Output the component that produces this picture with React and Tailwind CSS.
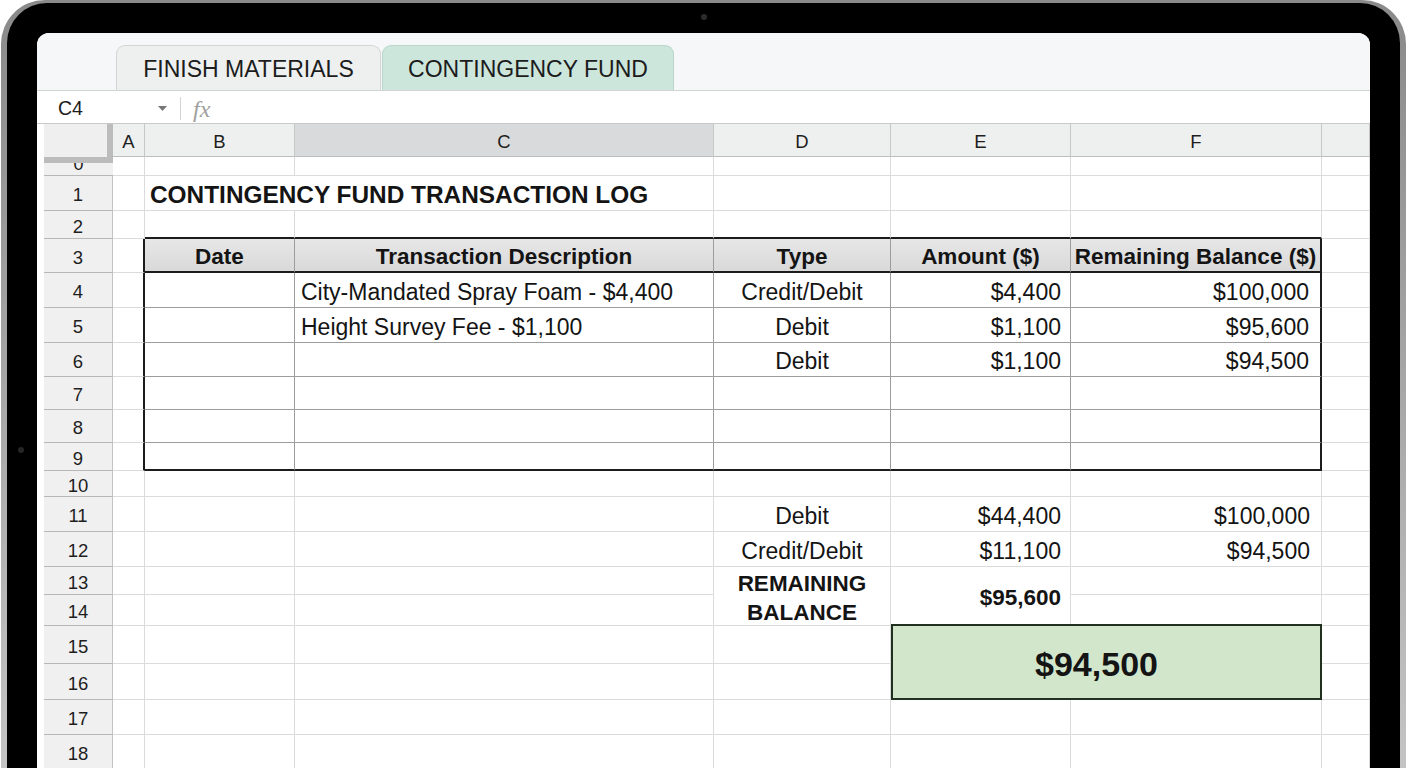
import { Fragment } from "react";

const COLS = ["A", "B", "C", "D", "E", "F", "G"];
const TABLE = ["B", "C", "D", "E", "F"];

// row number + height in px
const ROWS = [
    { n: 0, h: 19 },
    { n: 1, h: 35 },
    { n: 2, h: 28 },
    { n: 3, h: 34 },
    { n: 4, h: 35 },
    { n: 5, h: 35 },
    { n: 6, h: 34 },
    { n: 7, h: 33 },
    { n: 8, h: 33 },
    { n: 9, h: 28 },
    { n: 10, h: 26 },
    { n: 11, h: 35 },
    { n: 12, h: 35 },
    { n: 13, h: 28 },
    { n: 14, h: 31 },
    { n: 15, h: 38 },
    { n: 16, h: 36 },
    { n: 17, h: 35 },
    { n: 18, h: 35 },
];

const CELLS = {
    "1B": { text: "CONTINGENCY FUND TRANSACTION LOG", kind: "title" },
    "3B": { text: "Date", kind: "head" },
    "3C": { text: "Transaction Description", kind: "head" },
    "3D": { text: "Type", kind: "head" },
    "3E": { text: "Amount ($)", kind: "head" },
    "3F": { text: "Remaining Balance ($)", kind: "head" },
    "4C": { text: "City-Mandated Spray Foam - $4,400", kind: "left" },
    "4D": { text: "Credit/Debit", kind: "center" },
    "4E": { text: "$4,400", kind: "amount" },
    "4F": { text: "$100,000", kind: "balance" },
    "5C": { text: "Height Survey Fee - $1,100", kind: "left" },
    "5D": { text: "Debit", kind: "center" },
    "5E": { text: "$1,100", kind: "amount" },
    "5F": { text: "$95,600", kind: "balance" },
    "6D": { text: "Debit", kind: "center" },
    "6E": { text: "$1,100", kind: "amount" },
    "6F": { text: "$94,500", kind: "balance" },
    "11D": { text: "Debit", kind: "center" },
    "11E": { text: "$44,400", kind: "amount" },
    "11F": { text: "$100,000", kind: "balance" },
    "12D": { text: "Credit/Debit", kind: "center" },
    "12E": { text: "$11,100", kind: "amount" },
    "12F": { text: "$94,500", kind: "balance" },
};

const KIND = {
    title: "justify-start pl-[5px] text-[24.4px] font-bold whitespace-nowrap",
    head: "justify-center text-[22.5px] font-bold whitespace-nowrap",
    left: "justify-start pl-[6px] text-[23px] whitespace-nowrap",
    center: "justify-center text-[23px]",
    amount: "justify-end pr-[9px] text-[23px]",
    balance: "justify-end pr-[11px] text-[23px]",
};

const SKIP = ["1C", "14D", "14E", "15F", "16E", "16F"];

const inTable = (r, c) => r >= 3 && r <= 9 && TABLE.includes(c);

function borderRight(r, c) {
    if ((c === "A" || c === "F") && r >= 3 && r <= 9) return "border-r-2 border-r-[#1c1c1c]";
    if (inTable(r, c)) return "border-r border-r-[#9d9d9d]";
    return "border-r border-r-[#dbdbdb]";
}

function borderBottom(r, c) {
    if ((r === 2 || r === 3 || r === 9) && TABLE.includes(c)) return "border-b-2 border-b-[#1c1c1c]";
    if (inTable(r, c)) return "border-b border-b-[#9d9d9d]";
    return "border-b border-b-[#dbdbdb]";
}

function Cell({ r, c }) {
    const key = `${r}${c}`;

    if (key === "13D") {
        return (
            <div className="row-span-2 flex flex-col items-center justify-center pt-[3px] border-r border-b border-r-[#dbdbdb] border-b-[#dbdbdb] text-[22.5px] font-bold leading-[29px] text-[#141414]">
                <span>REMAINING</span>
                <span>BALANCE</span>
            </div>
        );
    }

    if (key === "13E") {
        return (
            <div className="row-span-2 flex items-center justify-end pt-[3px] pr-[9px] border-r border-b border-r-[#dbdbdb] border-b-[#dbdbdb] text-[22.5px] font-bold text-[#141414]">
                $95,600
            </div>
        );
    }

    if (key === "15E") {
        return (
            <div className="col-span-2 row-span-2 -mt-[2px] flex items-center justify-center pt-[5px] pr-[20px] border-2 border-[#22311f] bg-[#d2e6cc] text-[34px] font-bold text-[#141414]">
                $94,500
            </div>
        );
    }

    const cell = CELLS[key];
    const span = key === "1B" ? "col-span-2" : "";
    const bg = r === 3 && TABLE.includes(c) ? "bg-linear-to-b from-[#e7e7e7] to-[#d9d9d9]" : "";

    return (
        <div
            className={`flex items-center pt-[4px] text-[#141414] ${span} ${bg} ${borderRight(r, c)} ${borderBottom(r, c)} ${
                cell ? KIND[cell.kind] : ""
            }`}
        >
            {cell?.text}
        </div>
    );
}

function RowHead({ n }) {
    if (n === 0) {
        return (
            <div className="overflow-hidden border-t-[6px] border-t-[#bcbcbc] border-b border-b-[#b7b7b7] bg-[#f0f0f0] text-center">
                <span className="-mt-[8px] block text-[18px] leading-[18px] text-[#1e1e1e]">0</span>
            </div>
        );
    }
    return (
        <div className="flex items-center justify-center pt-[4px] border-r border-b border-r-[#c3c3c3] border-b-[#b7b7b7] bg-[#f0f0f0] text-[18.5px] text-[#1e1e1e]">
            {n}
        </div>
    );
}

function Sheet() {
    return (
        <div className="pl-[7px]">
            <div className="grid grid-cols-[69px_32px_150px_419px_177px_180px_251px_48px] grid-rows-[33px_19px_35px_28px_34px_35px_35px_34px_33px_33px_28px_26px_35px_35px_28px_31px_38px_36px_35px_35px]">

                {/* Column headers */}
                <div className="border-r-[6px] border-r-[#bcbcbc] bg-[#efefef]" />
                {COLS.map((c) => (
                    <div
                        key={c}
                        className={`flex items-center justify-center pt-[4px] border-r border-b border-r-[#c7c7c7] border-b-[#bdbdbd] text-[18.5px] text-[#1e1e1e] ${
                            c === "C" ? "bg-[#d9dadb]" : "bg-[#eeefef]"
                        }`}
                    >
                        {c === "G" ? "" : c}
                    </div>
                ))}

                {/* Rows */}
                {ROWS.map((row) => (
                    <Fragment key={row.n}>
                        <RowHead n={row.n} />
                        {COLS.map((c) =>
                            SKIP.includes(`${row.n}${c}`) ? null : <Cell key={c} r={row.n} c={c} />
                        )}
                    </Fragment>
                ))}
            </div>
        </div>
    );
}

export default function App() {
    return (
        <div className="h-[768px] w-[1408px] overflow-hidden bg-white font-['Liberation_Sans',Arial,sans-serif]">
            <div className="relative ml-[1px] h-[820px] w-[1405px] rounded-t-[44px] bg-linear-to-b from-[#8a8a8a] to-[#c8c8c8] px-[6px] pt-[3px]">
                <div className="h-full rounded-t-[40px] bg-black px-[30px] pt-[30px]">
                    <div className="h-full overflow-hidden rounded-t-[12px] bg-white">

                        {/* Sheet tabs */}
                        <div className="flex h-[58px] items-end gap-[1px] border-b border-[#d2d4d4] bg-[#f6f7f8] pl-[79px]">
                            <div className="flex h-[45px] w-[265px] items-center justify-center pt-[2px] rounded-t-[9px] border border-b-0 border-[#d3d5d5] bg-[#eef0f0] text-[23px] text-[#1c1c1c]">
                                FINISH MATERIALS
                            </div>
                            <div className="flex h-[45px] w-[292px] items-center justify-center pt-[2px] rounded-t-[9px] border border-b-0 border-[#b8d6ca] bg-[#cde6dc] text-[23px] text-[#1c1c1c]">
                                CONTINGENCY FUND
                            </div>
                        </div>

                        {/* Formula bar */}
                        <div className="flex h-[33px] items-center pt-[3px] border-b border-[#c9c9c9] bg-white">
                            <span className="w-[121px] pl-[21px] text-[19.5px] text-[#1c1c1c]">C4</span>
                            <svg width="9" height="5" viewBox="0 0 9 5" className="fill-[#777]">
                                <path d="M0 0h9L4.5 5z" />
                            </svg>
                            <div className="ml-[13px] h-[23px] w-px bg-[#d4d4d4]" />
                            <span className="ml-[12px] font-['Liberation_Serif',serif] text-[24px] italic text-[#a0a0a0]">fx</span>
                        </div>

                        <Sheet />
                    </div>
                </div>

                {/* Cameras */}
                <div className="absolute left-[700px] top-[14px] h-[6px] w-[6px] rounded-full bg-[#2b2b2b]" />
                <div className="absolute left-[17px] top-[447px] h-[6px] w-[6px] rounded-full bg-[#262626]" />
            </div>
        </div>
    );
}
